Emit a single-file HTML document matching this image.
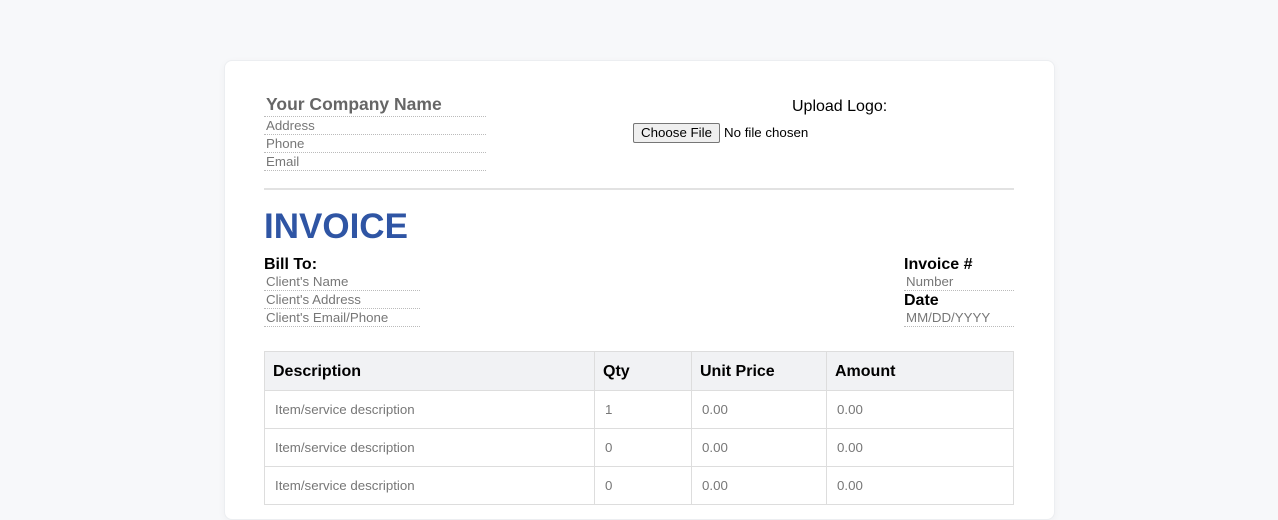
<!DOCTYPE html>
<html><head><style>
*{margin:0;padding:0;box-sizing:border-box}
body{width:1278px;height:501px;background:#f7f8fa;font-family:"Liberation Sans",Arial,sans-serif;position:relative;overflow:hidden}
.card{position:absolute;left:224px;top:60px;width:831px;height:460px;background:#fff;border:1px solid #eceef1;border-radius:8px;box-shadow:0 2px 8px rgba(0,0,0,0.04)}
.a{position:absolute;white-space:nowrap}
.f{position:absolute;border-bottom:1px dotted #bbb;color:#777;font-size:13.3px;height:18px;line-height:17px;padding-left:2px}
table{position:absolute;left:264px;top:351px;width:750px;border-collapse:collapse}
td,th{border:1px solid #ddd;text-align:left}
th{background:#f1f2f4;height:39px;font-size:16px;padding-left:8px;color:#000;padding-top:1px}
td{height:38px;font-size:13.3px;color:#777;padding-left:10px}
</style></head><body>
<div class="card"></div>
<div class="a" style="left:266px;top:94px;font-size:17.5px;font-weight:bold;color:#666">Your Company Name</div>
<div class="f" style="left:264px;top:98px;width:222px;height:19px"></div>
<div class="f" style="left:264px;top:117px;width:222px">Address</div>
<div class="f" style="left:264px;top:135px;width:222px">Phone</div>
<div class="f" style="left:264px;top:153px;width:222px">Email</div>
<div class="a" style="left:792px;top:98px;font-size:16px">Upload Logo:</div>
<div class="a" style="left:633px;top:123px;width:87px;height:20px;border:1px solid #767676;border-radius:2px;background:#efefef;font-size:13.3px;line-height:18px;text-align:center">Choose File</div>
<div class="a" style="left:724px;top:125px;font-size:13.3px">No file chosen</div>
<div class="a" style="left:264px;top:188px;width:750px;height:2px;background:#e2e2e2"></div>
<div class="a" style="left:264px;top:207px;font-size:35px;font-weight:bold;color:#2f55a4">INVOICE</div>
<div class="a" style="left:264px;top:256px;font-size:16px;font-weight:bold">Bill To:</div>
<div class="f" style="left:264px;top:273px;width:156px">Client's Name</div>
<div class="f" style="left:264px;top:291px;width:156px">Client's Address</div>
<div class="f" style="left:264px;top:309px;width:156px">Client's Email/Phone</div>
<div class="a" style="left:904px;top:256px;font-size:16px;font-weight:bold">Invoice #</div>
<div class="f" style="left:904px;top:273px;width:110px">Number</div>
<div class="a" style="left:904px;top:292px;font-size:16px;font-weight:bold">Date</div>
<div class="f" style="left:904px;top:309px;width:110px">MM/DD/YYYY</div>
<table>
<tr><th style="width:330px">Description</th><th style="width:97px">Qty</th><th style="width:135px">Unit Price</th><th>Amount</th></tr>
<tr><td>Item/service description</td><td>1</td><td>0.00</td><td>0.00</td></tr>
<tr><td>Item/service description</td><td>0</td><td>0.00</td><td>0.00</td></tr>
<tr><td>Item/service description</td><td>0</td><td>0.00</td><td>0.00</td></tr>
</table>
</body></html>
